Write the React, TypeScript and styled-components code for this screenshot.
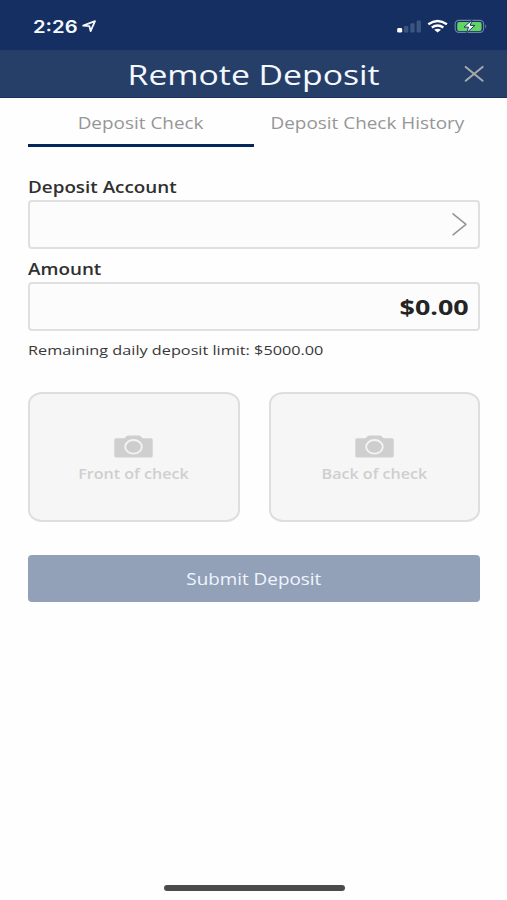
import React from "react";
import styled, { createGlobalStyle } from "styled-components";

const GlobalStyle = createGlobalStyle`
  * { box-sizing: border-box; }
  body { margin: 0; background: #fefefe; font-family: "Open Sans", sans-serif; }
  button { font: inherit; border: 0; padding: 0; background: none; }
`;

const Screen = styled.div`
  width: 507px;
  height: 900px;
  display: flex;
  flex-direction: column;
  background: #fefefe;
  overflow: hidden;
`;

/* Wide lettering: glyphs are stretched horizontally from the given edge. */
const Wide = styled.span<{ $size: number; $stretch?: number; $from?: string; $weight?: number }>`
  display: inline-block;
  white-space: nowrap;
  font-size: ${(p) => p.$size}px;
  font-weight: ${(p) => p.$weight ?? 400};
  transform: scaleX(${(p) => p.$stretch ?? 1.22});
  transform-origin: ${(p) => p.$from ?? "center"} center;
`;

const StatusBar = styled.header`
  height: 50px;
  flex: none;
  display: flex;
  justify-content: space-between;
  padding: 18px 19px 0 33px;
  background: #162f62;
  color: #f4f8ff;
`;

const Clock = styled.div`
  width: 64px;
  height: 18px;
  display: flex;
  align-items: flex-start;
  justify-content: space-between;
  font-family: Inter, sans-serif;
  line-height: 18px;
`;

const Indicators = styled.div`
  height: 17px;
  display: flex;
  align-items: flex-start;
`;

const TitleBar = styled.div`
  height: 48px;
  flex: none;
  display: grid;
  grid-template-columns: 66px 1fr 66px;
  align-items: center;
  justify-items: center;
  background: #263f69;
  border-top: 1px solid #233b69;
  border-bottom: 1px solid #1b3260;
  color: #f5f9ff;
`;

const Title = styled.h1`
  grid-column: 2;
  margin: 0;
  padding-bottom: 2px;
  line-height: 44px;
  font-weight: 400;
`;

const CloseButton = styled.button`
  width: 22px;
  height: 20px;
  padding-bottom: 2px;
  display: flex;
`;

const Content = styled.main`
  padding: 0 27px 0 28px;
  display: flex;
  flex-direction: column;
`;

const Tabs = styled.nav`
  display: grid;
  grid-template-columns: 1fr 1fr;
  height: 49px;
`;

const Tab = styled.button<{ $active?: boolean }>`
  height: 49px;
  padding-top: 4px;
  line-height: 42px;
  color: #969696;
  border-bottom: 3px solid ${(p) => (p.$active ? "#05265b" : "transparent")};
  text-align: center;
`;

const Field = styled.section`
  display: flex;
  flex-direction: column;
  color: #303030;
`;

const FieldLabel = styled.label`
  height: 24px;
  line-height: 22px;
`;

const FieldBox = styled.div`
  height: 49px;
  display: flex;
  align-items: center;
  justify-content: flex-end;
  padding: 0 10px;
  border: 2px solid #e0e0e0;
  border-radius: 4px;
  background: #fcfcfc;
  color: #242424;
`;

const Amount = styled.output`
  display: flex;
  margin-right: -1px;
  padding-bottom: 2px;
`;

const Fields = styled.div`
  display: flex;
  flex-direction: column;
  gap: 9px;
  padding-top: 29px;
`;

const Note = styled.p`
  margin: 8px 0 0;
  height: 21px;
  line-height: 20px;
  color: #383838;
`;

const Captures = styled.div`
  margin-top: 32px;
  display: grid;
  grid-template-columns: 1fr 1fr;
  gap: 29px;
`;

const Capture = styled.button`
  height: 130px;
  padding-top: 5px;
  display: flex;
  flex-direction: column;
  align-items: center;
  justify-content: center;
  gap: 6px;
  border: 2px solid #dedede;
  border-radius: 14px / 12px;
  background: #f6f6f6;
  color: #cfcfcf;
  line-height: 20px;
`;

const Submit = styled.button`
  margin-top: 33px;
  height: 47px;
  border-radius: 4px;
  background: #93a1b8;
  color: #eef5ff;
  line-height: 46px;
`;

const HomeIndicator = styled.div`
  width: 181px;
  height: 6px;
  margin: auto auto 9px 163.5px;
  border-radius: 3px;
  background: #4b4b4b;
`;

const LocationIcon = () => (
  <svg width="15" height="16" viewBox="0 -1.5 15 16" fill="none">
    <path d="M1.2 6.2 13 1.6 8.6 11.6 7.4 6.6Z" stroke="currentColor" strokeWidth="1.8" strokeLinejoin="round" />
  </svg>
);

const StatusIcons = () => (
  <svg width="92" height="17" viewBox="396 18 92 17">
    <rect x="397.2" y="28" width="5" height="4.6" rx="1.4" fill="#fff" />
    <g fill="#3a5580">
      <rect x="404" y="26" width="4.3" height="6.6" rx="1.2" />
      <rect x="410.3" y="23.3" width="4.3" height="9.3" rx="1.2" />
      <rect x="416.6" y="20.5" width="4.3" height="12.1" rx="1.2" />
    </g>
    <g fill="none" stroke="#fff" strokeWidth="2.4">
      <path d="M428.3 24.3Q437.6 17.7 446.9 24.3" />
      <path d="M431.8 27.5Q437.6 23.5 443.4 27.5" />
    </g>
    <path d="M434.2 29.8Q437.6 27.6 441 29.8L437.6 32.6Z" fill="#fff" />
    <rect x="455.2" y="20.4" width="28.4" height="12" rx="3.6" fill="none" stroke="#7183a4" strokeWidth="1.1" />
    <path d="M485.3 24.3Q487.4 26.3 485.3 28.5Z" fill="#7183a4" />
    <rect x="457.2" y="22" width="24.4" height="8.9" rx="2" fill="#62d465" />
    <path d="M472.2 19.8 464 27.1H468.6L466.6 32.8 475 25.4H470.2Z" fill="#fff" stroke="#1b3a62" strokeWidth="1" />
  </svg>
);

const CloseIcon = () => (
  <svg width="22" height="18" viewBox="0 0 22 18">
    <path d="M2.7 1.9 19.6 15.8M19.6 1.9 2.7 15.8" stroke="#a7aaac" strokeWidth="2" strokeLinecap="round" />
  </svg>
);

const ChevronIcon = () => (
  <svg width="17" height="25" viewBox="0 0 17 25" fill="none">
    <path d="M2 1.8 15 12.3 2 22.8" stroke="#949494" strokeWidth="1.5" strokeLinecap="round" strokeLinejoin="round" />
  </svg>
);

const CameraIcon = () => (
  <svg width="39" height="23" viewBox="0 0 39 23">
    <path
      d="M2 3.2H10.5L12.5 1.2Q13.2.4 14.5.4H24.6Q25.8.4 26.6 1.2L28.5 3.2H37Q38.7 3.2 38.7 4.8V20.8Q38.7 22.4 37 22.4H2Q.3 22.4.3 20.8V4.8Q.3 3.2 2 3.2Z"
      fill="#cfcfcf"
    />
    <ellipse cx="19.5" cy="11.8" rx="8.3" ry="6.8" fill="#cdcdcd" stroke="#f4f4f4" strokeWidth="1.8" />
  </svg>
);

export default function App() {
  return (
    <Screen>
      <GlobalStyle />
      <StatusBar>
        <Clock>
          <Wide $size={17} $stretch={1.19} $weight={600} $from="left">2:26</Wide>
          <LocationIcon />
        </Clock>
        <Indicators>
          <StatusIcons />
        </Indicators>
      </StatusBar>
      <TitleBar>
        <Title>
          <Wide $size={28} $stretch={1.205}>Remote Deposit</Wide>
        </Title>
        <CloseButton aria-label="Close">
          <CloseIcon />
        </CloseButton>
      </TitleBar>
      <Content>
        <Tabs>
          <Tab $active>
            <Wide $size={15.5}>Deposit Check</Wide>
          </Tab>
          <Tab>
            <Wide $size={15.5}>Deposit Check History</Wide>
          </Tab>
        </Tabs>
        <Fields>
          <Field>
            <FieldLabel>
              <Wide $size={15.5} $stretch={1.215} $weight={600} $from="left">Deposit Account</Wide>
            </FieldLabel>
            <FieldBox>
              <ChevronIcon />
            </FieldBox>
          </Field>
          <Field>
            <FieldLabel>
              <Wide $size={15.5} $stretch={1.215} $weight={600} $from="left">Amount</Wide>
            </FieldLabel>
            <FieldBox>
              <Amount>
                <Wide $size={22} $weight={700} $from="right">$0.00</Wide>
              </Amount>
            </FieldBox>
          </Field>
        </Fields>
        <Note>
          <Wide $size={13.5} $stretch={1.203} $from="left">Remaining daily deposit limit: $5000.00</Wide>
        </Note>
        <Captures>
          <Capture>
            <CameraIcon />
            <Wide $size={13.5} $stretch={1.19} $weight={600}>Front of check</Wide>
          </Capture>
          <Capture>
            <CameraIcon />
            <Wide $size={13.5} $stretch={1.19} $weight={600}>Back of check</Wide>
          </Capture>
        </Captures>
        <Submit>
          <Wide $size={15.6} $stretch={1.21}>Submit Deposit</Wide>
        </Submit>
      </Content>
      <HomeIndicator />
    </Screen>
  );
}
